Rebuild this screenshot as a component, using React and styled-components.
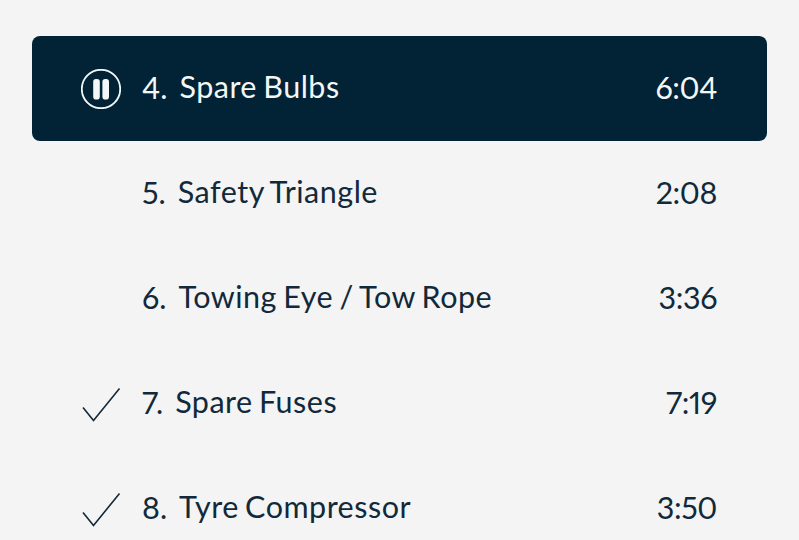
import React from 'react';
import styled, { createGlobalStyle } from 'styled-components';

const GlobalStyle = createGlobalStyle`
  html, body {
    margin: 0;
    padding: 0;
    background: #f4f4f4;
  }
  body {
    height: 540px;
    overflow: hidden;
    font-family: "Lato", "Liberation Sans", sans-serif;
  }
`;

const List = styled.ul`
  list-style: none;
  margin: 0;
  padding: 36px 32px 0;
`;

const Row = styled.li`
  display: flex;
  align-items: center;
  height: 105px;
  padding: 0 50px 0 49px;
  border-radius: 8px;
  background: ${(p) => (p.$active ? '#012335' : 'transparent')};
  color: ${(p) => (p.$active ? '#f4f7f7' : '#11293a')};
  font-size: 30.5px;
  font-variant-numeric: proportional-nums;
`;

const IconSlot = styled.div`
  width: 40px;
  height: 40px;
  margin-right: 21px;
  flex-shrink: 0;
  svg {
    display: block;
  }
`;

const Number = styled.span`
  margin-right: 12px;
  margin-bottom: 4px;
`;

const Title = styled.span`
  flex: 1;
  margin-bottom: 5px;
  letter-spacing: 0.5px;
  word-spacing: -2px;
`;

const Time = styled.span`
  margin-bottom: 3px;
  letter-spacing: -0.4px;
`;

const PauseIcon = () => (
  <svg width="40" height="40" viewBox="0 0 40 40" fill="none">
    <circle cx="20" cy="20" r="19.2" stroke="currentColor" strokeWidth="1.8" />
    <rect x="12.2" y="10" width="6.6" height="20.5" rx="2.8" fill="currentColor" />
    <rect x="21.4" y="10" width="6.6" height="20.5" rx="2.8" fill="currentColor" />
  </svg>
);

const CheckIcon = () => (
  <svg width="40" height="40" viewBox="0 0 40 40" fill="none">
    <path d="M2 23.5 L12.5 36.5 L38.5 4.5" stroke="currentColor" strokeWidth="1.6" />
  </svg>
);

const tracks = [
  { num: '4.', title: 'Spare Bulbs', time: '6:04', active: true, icon: 'pause' },
  { num: '5.', title: 'Safety Triangle', time: '2:08' },
  { num: '6.', title: 'Towing Eye / Tow Rope', time: '3:36' },
  { num: '7.', title: 'Spare Fuses', time: '7:19', icon: 'check' },
  { num: '8.', title: 'Tyre Compressor', time: '3:50', icon: 'check' },
];

const App = () => (
  <>
    <GlobalStyle />
    <List>
      {tracks.map((t) => (
        <Row key={t.num} $active={t.active}>
          <IconSlot>
            {t.icon === 'pause' && <PauseIcon />}
            {t.icon === 'check' && <CheckIcon />}
          </IconSlot>
          <Number>{t.num}</Number>
          <Title>{t.title}</Title>
          <Time>{t.time}</Time>
        </Row>
      ))}
    </List>
  </>
);

export default App;
